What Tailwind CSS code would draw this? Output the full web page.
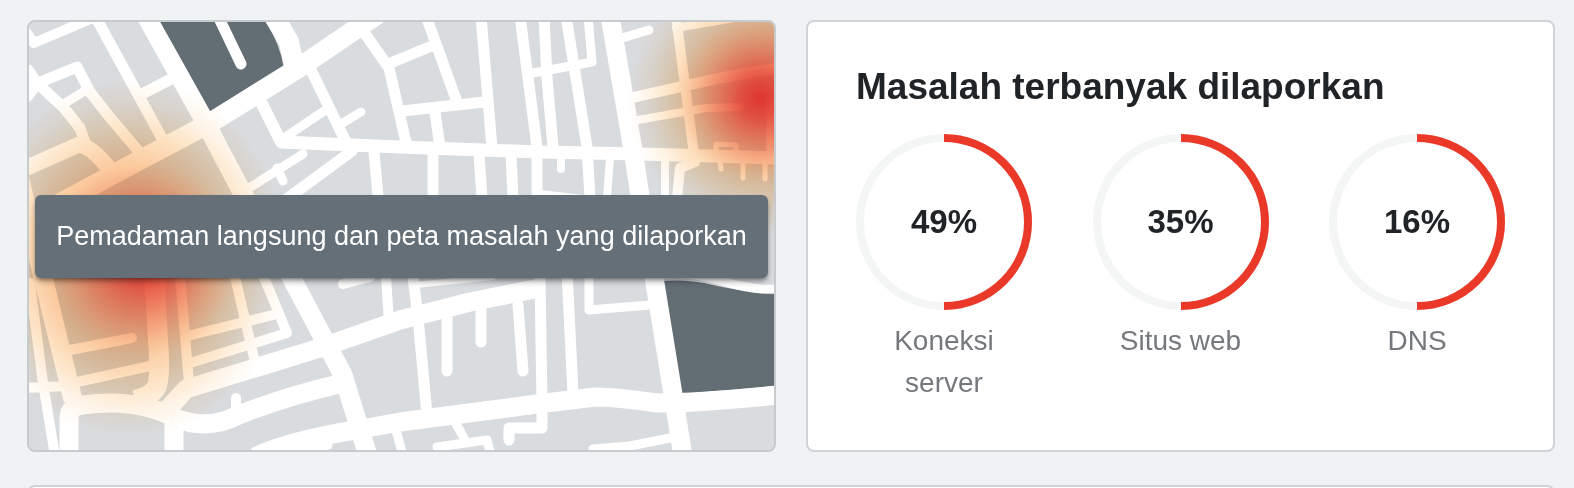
<!DOCTYPE html>
<html lang="id">
<head>
  <meta charset="UTF-8" />
  <meta name="viewport" content="width=device-width, initial-scale=1.0" />
  <title>Masalah terbanyak dilaporkan</title>
  <script src="https://cdn.jsdelivr.net/npm/@tailwindcss/browser@4"></script>
</head>
<body class="bg-[#f0f2f4] min-h-screen overflow-hidden font-['Helvetica_Neue','Liberation_Sans',Arial,sans-serif] text-[#212427]">
  <main class="pl-[27px] pr-[19px] pt-5">
    <div class="grid grid-cols-2 gap-[30px]">

      <!-- Outage map -->
      <section class="relative flex items-center overflow-hidden rounded-lg border-2 border-[#c8cbce] bg-[#d9dcdf] px-1.5">
        <svg class="absolute inset-0 h-full w-full" viewBox="29 22 745 428" preserveAspectRatio="xMidYMid slice" aria-hidden="true">
          <defs>
            <radialGradient id="heat">
              <stop offset="0" stop-color="#f0704f" />
              <stop offset="0.3" stop-color="#f7a57c" />
              <stop offset="0.5" stop-color="#fbc89c" />
              <stop offset="0.7" stop-color="#fde3c4" />
              <stop offset="0.85" stop-color="#fef4e7" />
              <stop offset="1" stop-color="#ffffff" />
            </radialGradient>
            <radialGradient id="core">
              <stop offset="0" stop-color="#e0332e" stop-opacity="0.95" />
              <stop offset="0.25" stop-color="#e4463b" stop-opacity="0.8" />
              <stop offset="0.6" stop-color="#ea7257" stop-opacity="0.45" />
              <stop offset="1" stop-color="#f4a67c" stop-opacity="0" />
            </radialGradient>
          </defs>
          <rect x="29" y="22" width="745" height="428" fill="#d9dcdf" />

          <!-- parks -->
          <g fill="#636d74">
            <path d="M155 20H264Q280 42 284 69L209 115Z" />
            <path d="M661 281Q690 279 713 285T778 293V386L679 394Z" />
          </g>

          <!-- main roads -->
          <g fill="none" stroke="#fff" stroke-width="19" stroke-linejoin="round">
            <path d="M146 16L203 118L243 194L290 275L343 375L368 456" />
            <path d="M378 14L300 67L210 123L125 168L40 214" stroke-width="20" />
            <path d="M273 14L289 42L294 64" stroke-width="20" />
            <path d="M610 16L633 150L640 196L654 277L683 456" />
            <path d="M20 180L43 277L73 400" />
            <path d="M69 456V418Q69 406 83 405Q135 398 173 417M174 420V456" />
            <path d="M173 417Q200 429 227 420C250 410 283 397 343 383" />
            <path d="M167 410L186 389L320 348L400 320L470 302L540 288" />
            <path d="M154 270L158 340Q161 380 156 388T135 400" stroke-width="20" />
            <path d="M255 457Q290 440 367 428L400 422L537 404L595 397Q615 397 657 403Q700 403 778 395" />
            <path d="M26 168L78 145Q90 144 112 172" stroke-width="16" />
            <path d="M281 142L400 147L540 152L640 154L778 158" stroke-width="13" />
          </g>

          <!-- streets -->
          <g fill="none" stroke="#fff" stroke-width="11" stroke-linecap="round" stroke-linejoin="round">
            <path d="M26 32L34 43L95 17" stroke-width="10" />
            <path d="M95 16L164 142M217 14L241 64M140 95L173 78" />
            <path d="M26 88L77 67L90 92L108 115L140 153" />
            <path d="M28 70L37 83L64 108L80 128L86 145M37 84L27 97" />
            <path d="M62 105L88 89" stroke-width="9" />
            <path d="M310 68L347 144M361 28L389 68L407 147M388 64L432 46" />
            <path d="M262 104L281 142" stroke-width="12" />
            <path d="M284 138L327 109M341 124L361 112M249 188L303 154M277 168L283 181" stroke-width="9" />
            <path d="M288 198L352 151M374 152L378 196" />
            <path d="M426 16L457 102M402 111L484 102M481 16L492 148M435 112L440 148" />
            <path d="M520 16L537 147V198M566 16L587 147L590 198" />
            <path d="M544 16L547 78L553 147" />
            <path d="M588 16L592 62L533 73M622 38L649 30" stroke-width="9" />
            <path d="M433 154V198M479 154L482 198M511 154L513 198" />
            <path d="M561 155V169M610 158L607 198M665 157V198M540 194L600 201" stroke-width="8" />
            <path d="M676 16L695 162L680 168L677 198" stroke-width="10" />
            <path d="M676 28L735 18M638 120L706 108L740 107" stroke-width="8" />
            <path d="M770 100V156" stroke-width="7" />
            <path d="M635 97L720 78L778 68" />
            <path d="M716 156V144L736 145V156M720 160L721 169M743 160V178M765 160V179" stroke-width="5" />
            <path d="M30 283L43 383L55 456M26 388L67 386" stroke-width="10" />
            <path d="M180 277L189 383M70 350L132 338M77 382L150 366" stroke-width="10" />
            <path d="M187 336L273 315M190 363L287 333L263 275M235 277L255 362" stroke-width="10" />
            <path d="M343 284L370 277M386 277L389 322M236 398V412" stroke-width="10" />
            <path d="M415 285L493 277" stroke-width="6" />
            <path d="M413 277L418 317L427 415M447 315V371M481 310V342M518 305L523 371" />
            <path d="M540 277L542 405V428H509V440M567 270L573 394" />
            <path d="M589 277V310L650 305M658 275Q690 271 722 281T778 289" stroke-width="9" />
            <path d="M396 430L403 456M455 422L465 440M437 447L487 440L491 456M593 449L630 446L675 437M300 451L328 445" stroke-width="9" />
          </g>

          <!-- heat spots -->
          <g class="mix-blend-multiply" fill="url(#heat)">
            <ellipse cx="130" cy="258" rx="160" ry="180" />
            <circle cx="768" cy="98" r="140" />
          </g>
          <g fill="url(#core)">
            <circle cx="145" cy="260" r="96" />
            <circle cx="760" cy="98" r="84" />
          </g>
        </svg>
        <button type="button" class="relative w-full whitespace-nowrap rounded-md bg-[#656f77] py-5 text-[27px] leading-[43px] text-white shadow-md shadow-black/40">Pemadaman langsung dan peta masalah yang dilaporkan</button>
      </section>

      <!-- Most reported problems -->
      <section class="min-h-[432px] rounded-lg border-2 border-[#d0d4d6] bg-white px-12 pt-10">
        <h2 class="whitespace-nowrap text-[37px] font-bold leading-[50px]">Masalah terbanyak dilaporkan</h2>
        <ul class="mt-[22px] flex justify-between text-center">
          <li class="w-44">
            <div class="relative flex h-44 items-center justify-center">
              <svg class="absolute inset-0" viewBox="0 0 176 176" fill="none" stroke-width="8" aria-hidden="true">
                <circle cx="88" cy="88" r="84" stroke="#f4f5f5" />
                <path d="M88 4A84 84 0 0 1 88 172" stroke="#ea3829" />
              </svg>
              <strong class="relative text-[33px] leading-10">49%</strong>
            </div>
            <p class="mt-2.5 text-[28px] leading-[42px] text-[#75797d]">Koneksi server</p>
          </li>
          <li class="w-44">
            <div class="relative flex h-44 items-center justify-center">
              <svg class="absolute inset-0" viewBox="0 0 176 176" fill="none" stroke-width="8" aria-hidden="true">
                <circle cx="88" cy="88" r="84" stroke="#f4f5f5" />
                <path d="M88 4A84 84 0 0 1 88 172" stroke="#ea3829" />
              </svg>
              <strong class="relative text-[33px] leading-10">35%</strong>
            </div>
            <p class="mt-2.5 text-[28px] leading-[42px] text-[#75797d]">Situs web</p>
          </li>
          <li class="w-44">
            <div class="relative flex h-44 items-center justify-center">
              <svg class="absolute inset-0" viewBox="0 0 176 176" fill="none" stroke-width="8" aria-hidden="true">
                <circle cx="88" cy="88" r="84" stroke="#f4f5f5" />
                <path d="M88 4A84 84 0 0 1 88 172" stroke="#ea3829" />
              </svg>
              <strong class="relative text-[33px] leading-10">16%</strong>
            </div>
            <p class="mt-2.5 text-[28px] leading-[42px] text-[#75797d]">DNS</p>
          </li>
        </ul>
      </section>
    </div>

    <section class="mt-[33px] h-20 rounded-lg border-2 border-[#d0d4d6] bg-white"></section>
  </main>
</body>
</html>
